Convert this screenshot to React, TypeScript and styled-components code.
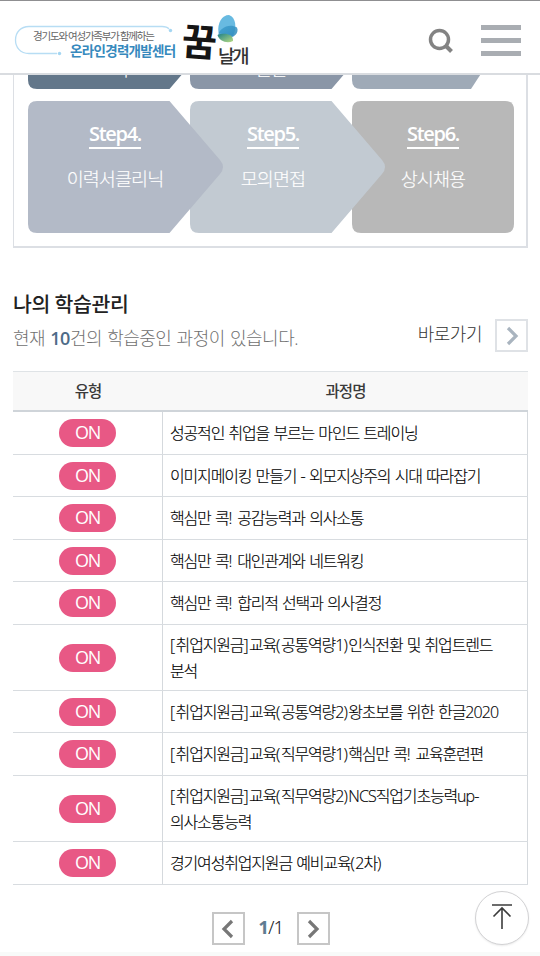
import React from "react";
import styled, { createGlobalStyle, css } from "styled-components";

const GlobalStyle = createGlobalStyle`
  * { box-sizing: border-box; }
  body {
    margin: 0;
    background: #fff;
    font-family: "Open Sans", "Noto Sans CJK KR", sans-serif;
    font-weight: 300;
    color: #111;
  }
`;

const Page = styled.div`
  position: relative;
  width: 540px;
  height: 956px;
  overflow: hidden;
  display: flex;
  flex-direction: column;
  background: #fff;
`;

const Header = styled.header`
  height: 75px;
  flex: none;
  display: flex;
  align-items: flex-start;
  border-top: 1px solid #8f8f91;
  border-bottom: 2px solid #d9dce0;
`;

const Brand = styled.div`
  position: relative;
  width: 255px;
  height: 72px;
  margin-right: 173px;
`;

const BrandArt = styled.svg`
  display: block;
`;

const BrandWord = styled.span<{ $x: number; $y: number; $size: number; $color: string; $weight: number; $ls: number; $tilt?: number }>`
  position: absolute;
  left: ${(p) => p.$x}px;
  top: ${(p) => p.$y}px;
  font-size: ${(p) => p.$size}px;
  line-height: 1;
  font-weight: ${(p) => p.$weight};
  letter-spacing: ${(p) => p.$ls}px;
  color: ${(p) => p.$color};
  font-family: "Noto Sans CJK KR", sans-serif;
  white-space: nowrap;
  ${(p) => p.$tilt && css`transform: rotate(${p.$tilt}deg);`}
`;

const IconButton = styled.button<{ $top: number; $gap?: number }>`
  display: flex;
  padding: 0;
  border: 0;
  background: none;
  margin-top: ${(p) => p.$top}px;
  margin-right: ${(p) => p.$gap ?? 0}px;
`;

const MenuBars = styled.span`
  display: flex;
  flex-direction: column;
  gap: 8px;
  width: 40px;
`;

const Bar = styled.span`
  height: 5px;
  background: #a9adb2;
`;

const StepPanel = styled.section`
  flex: none;
  height: 173px;
  margin: 0 12px 0 13px;
  padding: 0 13px 0 13.5px;
  border: solid #dcdfe4;
  border-width: 0 2px 2px 1px;
  overflow: hidden;
`;

const StepRow = styled.div<{ $clipped?: boolean }>`
  display: grid;
  grid-template-columns: 162px 162px 162px;
  grid-template-rows: ${(p) => (p.$clipped ? 14 : 132)}px;
  align-items: end;
  margin-bottom: 12px;
  ${(p) => p.$clipped && css`overflow: hidden;`}
`;

const Step = styled.div<{ $z: number }>`
  position: relative;
  z-index: ${(p) => p.$z};
  width: 162px;
  height: 132px;
`;

const StepShape = styled.svg`
  position: absolute;
  inset: 0 auto auto 0;
  overflow: visible;
`;

const StepText = styled.div<{ $shift: number; $top: number }>`
  position: relative;
  display: flex;
  flex-direction: column;
  align-items: center;
  width: 162px;
  padding-top: ${(p) => p.$top}px;
  padding-left: ${(p) => p.$shift}px;
  color: #fff;
`;

const StepNumber = styled.strong`
  height: 27px;
  font-size: 20px;
  line-height: 24px;
  font-weight: 600;
  letter-spacing: -1.3px;
  border-bottom: 2px solid #fff;
`;

const StepName = styled.span`
  margin-top: 16px;
  font-size: 18.5px;
  line-height: 27px;
  letter-spacing: -0.9px;
  white-space: nowrap;
  -webkit-text-stroke: 0.15px;
`;

const LearningHead = styled.section`
  flex: none;
  display: flex;
  justify-content: space-between;
  height: 123px;
  padding: 42px 12px 0 13px;
`;

const Title = styled.h2`
  margin: 0;
  font-size: 20.5px;
  line-height: 28px;
  font-weight: 500;
  letter-spacing: -0.35px;
  word-spacing: -0.5px;
  color: #222;
`;

const Summary = styled.p`
  margin: 6px 0 0;
  font-size: 18px;
  line-height: 28px;
  letter-spacing: -0.5px;
  word-spacing: 1px;
  color: #707070;
`;

const Count = styled.b`
  font-weight: 600;
  color: #4d6b87;
`;

const Shortcut = styled.a`
  display: flex;
  height: 33px;
  margin-top: 29px;
  gap: 13px;
  font-size: 18px;
  line-height: 30px;
  letter-spacing: -0.5px;
  color: #333;
`;

const SquareButton = styled.button<{ $line: string }>`
  display: flex;
  align-items: center;
  justify-content: center;
  width: 33px;
  height: 33px;
  padding: 0;
  border: 2px solid ${(p) => p.$line};
  background: #fff;
`;

const Table = styled.div`
  flex: none;
  margin: 0 12px 0 13px;
`;

const HeadRow = styled.div`
  display: grid;
  grid-template-columns: 150px 1fr;
  height: 41px;
  border-top: 1px solid #dfe3e6;
  border-bottom: 2px solid #cfd4d9;
  background: #f8f8f8;
  font-size: 15.5px;
  line-height: 39px;
  font-weight: 500;
  letter-spacing: -1px;
  text-align: center;
  color: #3a3a3a;
`;

const CourseRow = styled.div<{ $height: number }>`
  display: grid;
  grid-template-columns: 150px 1fr;
  height: ${(p) => p.$height}px;
  border-bottom: 1px solid #d8dce0;
`;

const TypeCell = styled.div`
  display: flex;
  align-items: center;
  justify-content: center;
  border-right: 1px solid #d5d9dd;
`;

const Badge = styled.span`
  width: 57px;
  height: 28px;
  border-radius: 14px;
  background: #e85885;
  color: #fff;
  font-size: 18px;
  line-height: 27px;
  font-weight: 400;
  letter-spacing: -1.2px;
  text-align: center;
`;

const NameCell = styled.div`
  display: flex;
  flex-direction: column;
  justify-content: center;
  padding-left: 7px;
  border-right: 1px solid #d5d9dd;
  font-size: 16px;
  line-height: 26px;
  letter-spacing: -1.17px;
  word-spacing: 1.3px;
  white-space: nowrap;
  color: #000;
  -webkit-text-stroke: 0.15px;
`;

const Latin = styled.span<{ $mark: boolean }>`
  letter-spacing: ${(p) => (p.$mark ? 0.5 : -0.9)}px;
`;

const Pager = styled.nav`
  display: flex;
  align-items: center;
  justify-content: center;
  gap: 14px;
  margin: 27px 0 0 1px;
  height: 33px;
`;

const PageCount = styled.span`
  width: 24px;
  font-size: 18px;
  line-height: 31px;
  height: 33px;
  letter-spacing: -0.6px;
  text-align: center;
  white-space: nowrap;
  -webkit-text-stroke: 0.15px;
`;

const Current = styled.b`
  font-weight: 700;
  color: #5f7b92;
`;

const TopButton = styled.button`
  position: absolute;
  right: 11px;
  bottom: 11px;
  width: 54px;
  height: 54px;
  padding: 0;
  border: 1px solid #d2d2d4;
  border-radius: 50%;
  background: #fff;
  box-shadow: 0 1px 2px rgba(0, 0, 0, 0.08);
`;

const BottomEdge = styled.div`
  margin-top: auto;
  height: 4px;
  background: #f8faf9;
`;

const ARROW = "M9 0H141.500L192 59Q198 66 192 73L141.500 132H9Q0 132 0 123V9Q0 0 9 0Z";
const SHORT_ARROW = "M9 0H119L162 66L119 132H9Q0 132 0 123V9Q0 0 9 0Z";
const BOX = "M9 0H153Q162 0 162 9V123Q162 132 153 132H9Q0 132 0 123V9Q0 0 9 0Z";

const lastRow = [
  { number: "Step4.", name: "이력서클리닉", color: "#b3bac7", path: ARROW, shift: 13 },
  { number: "Step5.", name: "모의면접", color: "#c2cad2", path: ARROW, shift: 5 },
  { number: "Step6.", name: "상시채용", color: "#b8b8b8", path: BOX, shift: 1 },
];

const firstRow = [
  { name: "교육", color: "#63778a", path: ARROW, shift: 8 },
  { name: "진단", color: "#8a96a7", path: ARROW, shift: 0 },
  { name: "", color: "#9faab7", path: SHORT_ARROW, shift: 0 },
];

const courses = [
  { height: 43, lines: ["성공적인 취업을 부르는 마인드 트레이닝"] },
  { height: 42, lines: ["이미지메이킹 만들기 - 외모지상주의 시대 따라잡기"] },
  { height: 43, lines: ["핵심만 콕! 공감능력과 의사소통"] },
  { height: 42, lines: ["핵심만 콕! 대인관계와 네트워킹"] },
  { height: 43, lines: ["핵심만 콕! 합리적 선택과 의사결정"] },
  { height: 66, lines: ["[취업지원금]교육(공통역량1)인식전환 및 취업트렌드", "분석"] },
  { height: 42, lines: ["[취업지원금]교육(공통역량2)왕초보를 위한 한글2020"] },
  { height: 43, lines: ["[취업지원금]교육(직무역량1)핵심만 콕! 교육훈련편"] },
  { height: 66, lines: ["[취업지원금]교육(직무역량2)NCS직업기초능력up-", "의사소통능력"] },
  { height: 43, lines: ["경기여성취업지원금 예비교육(2차)"] },
];

const CourseLine = ({ text }: { text: string }) => (
  <span>
    {text.split(/([[\]()!]+|[A-Za-z0-9-]+)/).map((part, i) =>
      i % 2 ? <Latin key={i} $mark={/[[\]()!]/.test(part)}>{part}</Latin> : part
    )}
  </span>
);

const Chevron = ({ left, color }: { left?: boolean; color: string }) => (
  <svg width="14" height="20" viewBox="0 0 14 20" fill="none" stroke={color} strokeWidth="3.2">
    <path d={left ? "M11 2L3 10L11 18" : "M3 2L11 10L3 18"} />
  </svg>
);

const Logo = () => (
  <Brand>
    <BrandArt width="255" height="72" viewBox="0 1 255 72">
      <defs>
        <linearGradient id="wing" x1="0" y1="0" x2="1" y2="1">
          <stop offset="0" stopColor="#3f9fce" />
          <stop offset="1" stopColor="#2a85b8" />
        </linearGradient>
        <linearGradient id="leaf" x1="0" y1="0" x2="1" y2="1">
          <stop offset="0" stopColor="#1d7f86" />
          <stop offset="1" stopColor="#b7dc83" />
        </linearGradient>
      </defs>
      <path d="M57 53.500H29C20 53.500 15.500 47 15.500 40C15.500 32 21 26.500 29 26.500H162Q167 26.500 169 29" fill="none" stroke="#b7ddf4" strokeWidth="1.300" />
      <circle cx="170.500" cy="30.500" r="1.700" fill="#a4d6f2" />
      <circle cx="59.500" cy="53.500" r="1.700" fill="#a4d6f2" />
      <path d="M218.500 33C217 23 222 15 229 15C236 17 237 28 233 36Z" fill="#68bae1" />
      <path d="M218 36C219 28 229 23 237 27.500C240 34 231 41 220 37Z" fill="url(#wing)" opacity=".85" />
      <path d="M217.500 35C224 32 234 34 233 41C227 44 219 41 217.500 35Z" fill="url(#leaf)" />
    </BrandArt>
    <BrandWord $x={33} $y={30} $size={10.5} $color="#666" $weight={400} $ls={-1.2}>경기도와 여성가족부가 함께하는</BrandWord>
    <BrandWord $x={70} $y={43} $size={13.5} $color="#3689bd" $weight={700} $ls={-0.7}>온라인경력개발센터</BrandWord>
    <BrandWord $x={182} $y={20} $size={38} $color="#151515" $weight={700} $ls={0} $tilt={4}>꿈</BrandWord>
    <BrandWord $x={218} $y={45} $size={18.5} $color="#333" $weight={500} $ls={-2.5}>날개</BrandWord>
  </Brand>
);

export default function App() {
  return (
    <>
      <GlobalStyle />
      <Page>
        <Header>
          <Logo />
          <IconButton $top={27} $gap={27} aria-label="검색">
            <svg width="26" height="26" viewBox="0 0 26 26" fill="none" stroke="#838383">
              <circle cx="11.500" cy="11.500" r="9" strokeWidth="3.500" />
              <path d="M17.500 17.500L23.500 23.500" strokeWidth="4" />
            </svg>
          </IconButton>
          <IconButton $top={24} aria-label="메뉴">
            <MenuBars><Bar /><Bar /><Bar /></MenuBars>
          </IconButton>
        </Header>

        <StepPanel>
          <StepRow $clipped>
            {firstRow.map((step, i) => (
              <Step key={i} $z={3 - i}>
                <StepShape width="162" height="132"><path d={step.path} fill={step.color} /></StepShape>
                <StepText $shift={step.shift} $top={82}><StepName>{step.name}</StepName></StepText>
              </Step>
            ))}
          </StepRow>
          <StepRow>
            {lastRow.map((step, i) => (
              <Step key={step.number} $z={3 - i}>
                <StepShape width="162" height="132"><path d={step.path} fill={step.color} /></StepShape>
                <StepText $shift={step.shift} $top={21}>
                  <StepNumber>{step.number}</StepNumber>
                  <StepName>{step.name}</StepName>
                </StepText>
              </Step>
            ))}
          </StepRow>
        </StepPanel>

        <LearningHead>
          <div>
            <Title>나의 학습관리</Title>
            <Summary>현재 <Count>10</Count>건의 학습중인 과정이 있습니다.</Summary>
          </div>
          <Shortcut>
            바로가기
            <SquareButton $line="#dfe2e6" aria-label="바로가기"><Chevron color="#a9b4bf" /></SquareButton>
          </Shortcut>
        </LearningHead>

        <Table>
          <HeadRow><span>유형</span><span>과정명</span></HeadRow>
          {courses.map((course) => (
            <CourseRow key={course.lines[0]} $height={course.height}>
              <TypeCell><Badge>ON</Badge></TypeCell>
              <NameCell>{course.lines.map((line) => <CourseLine key={line} text={line} />)}</NameCell>
            </CourseRow>
          ))}
        </Table>

        <Pager>
          <SquareButton $line="#c6c6c6" aria-label="이전"><Chevron left color="#777" /></SquareButton>
          <PageCount><Current>1</Current>/1</PageCount>
          <SquareButton $line="#c6c6c6" aria-label="다음"><Chevron color="#777" /></SquareButton>
        </Pager>
        <BottomEdge />

        <TopButton aria-label="맨 위로">
          <svg width="22" height="28" viewBox="0 0 22 28" fill="none" stroke="#3c3c3c" strokeWidth="1.600">
            <path d="M1 2H21M11 26V5M2.500 13.500L11 5L19.500 13.500" />
          </svg>
        </TopButton>
      </Page>
    </>
  );
}
